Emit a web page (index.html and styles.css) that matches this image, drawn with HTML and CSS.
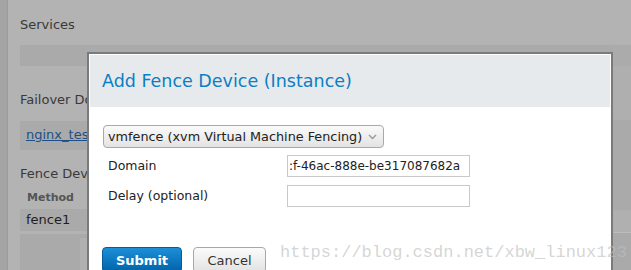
FILE: index.html
```html
<!DOCTYPE html>
<html>
<head>
<meta charset="utf-8">
<link rel="stylesheet" href="styles.css">
</head>
<body>
<div class="app">
  <div class="strip"></div>
  <div class="main">
    <div class="heading h-services">Services</div>
    <div class="bar"></div>
    <div class="heading h-failover">Failover Domain</div>
    <div class="linkbox"><a class="link" href="#">nginx_test</a></div>
    <div class="heading h-fence">Fence Devices</div>
    <div class="colhead">Method</div>
    <div class="row">fence1</div>
    <div class="lower"><div class="lower-left"></div><div class="lower-right"></div></div>
  </div>
  <div class="right">
    <div class="r1"></div><div class="r2"></div><div class="r3"></div><div class="r4"></div><div class="r5"></div><div class="r6"></div>
  </div>
</div>

<div class="modal">
  <div class="modal-head">Add Fence Device (Instance)</div>
  <div class="modal-body">
    <div class="select">
      <span>vmfence (xvm Virtual Machine Fencing)</span>
      <svg class="chev" width="9" height="6" viewBox="0 0 9 6"><path d="M1 1 L4.5 4.5 L8 1" fill="none" stroke="#9a9a9a" stroke-width="1.4"/></svg>
    </div>
    <div class="form">
      <div class="label">Domain</div>
      <div class="input">:f-46ac-888e-be317087682a</div>
      <div class="label">Delay (optional)</div>
      <div class="input"></div>
    </div>
    <div class="buttons">
      <div class="btn submit">Submit</div>
      <div class="btn cancel">Cancel</div>
    </div>
  </div>
</div>

<div class="watermark">https://blog.csdn.net/xbw_linux123</div>
</body>
</html>
```
FILE: styles.css
```css
html, body {
  margin: 0;
  padding: 0;
}
body {
  width: 631px;
  height: 270px;
  overflow: hidden;
  background: #b3b3b3;
  font-family: "DejaVu Sans", Verdana, sans-serif;
  font-size: 13px;
  position: relative;
}
.app {
  display: flex;
  height: 270px;
}
.strip {
  width: 7px;
  background: #a4a4a4;
  border-right: 1px solid #9c9c9c;
  flex: none;
}
.main {
  flex: 1;
  padding-left: 12px;
  display: flex;
  flex-direction: column;
}
.heading {
  color: #393939;
  height: 16px;
  line-height: 16px;
  white-space: nowrap;
}
.h-services { margin-top: 17px; }
.bar {
  margin-top: 12px;
  height: 21px;
  background: #aaaaaa;
}
.h-failover { margin-top: 26px; }
.linkbox {
  margin-top: 13px;
  height: 29px;
  background: #aaaaaa;
  padding-left: 6px;
  line-height: 28px;
}
.link {
  color: #1c4f86;
  text-decoration: underline;
}
.h-fence { margin-top: 16px; }
.colhead {
  margin-top: 9px;
  font-size: 11px;
  font-weight: bold;
  color: #555;
  padding-left: 7px;
  line-height: 14px;
}
.row {
  margin-top: 4px;
  height: 22px;
  line-height: 22px;
  background: #aaaaaa;
  padding-left: 6px;
  color: #1e1e1e;
}
.lower {
  margin-top: 3px;
  flex: 1;
  display: flex;
  background: #aaaaaa;
}
.lower-left { width: 60px; }
.lower-right {
  flex: 1;
  margin-top: 4px;
  background: #b0b0b0;
}
.right {
  width: 18px;
  flex: none;
  display: flex;
  flex-direction: column;
}
.r1 { height: 45px; background: #b3b3b3; }
.r2 { height: 21px; background: #ababab; }
.r3 { height: 54px; background: #afafaf; }
.r4 { height: 90px; background: #aaaaaa; }
.r5 { height: 22px; background: #b0b0b0; border-bottom: 1px solid #bcbcbc; }
.r6 { flex: 1; background: #aaaaaa; }

.modal {
  position: absolute;
  left: 87px;
  top: 52px;
  width: 520px;
  height: 220px;
  border: 2px solid #7a7a7a;
  border-bottom: none;
  padding: 1px;
  background: #fff;
}
.modal-head {
  height: 52px;
  background: #e6eaed;
  color: #0b7ec4;
  font-size: 17.5px;
  line-height: 52px;
  padding-left: 12px;
}
.modal-body {
  padding: 18px 0 0 13px;
}
.select {
  width: 275px;
  height: 21px;
  border: 1px solid #a9a9a9;
  border-radius: 4px;
  background: linear-gradient(#fafafa, #e3e3e3);
  display: flex;
  align-items: center;
  padding-left: 4px;
  color: #222;
  font-size: 12.8px;
  box-sizing: content-box;
  white-space: nowrap;
}
.select span { flex: 1; }
.chev { margin-right: 6px; }
.form {
  display: grid;
  grid-template-columns: 179px 183px;
  grid-auto-rows: 22px;
  row-gap: 8px;
  margin-top: 7px;
  margin-left: 5px;
}
.label {
  color: #222;
  font-size: 12.5px;
  line-height: 22px;
}
.input {
  border: 1px solid #c9c9c9;
  box-sizing: border-box;
  line-height: 20px;
  padding-left: 1px;
  color: #222;
  font-size: 12px;
  white-space: nowrap;
  overflow: hidden;
}
.buttons {
  display: flex;
  gap: 11px;
  margin-top: 40px;
  margin-left: -1px;
}
.btn {
  height: 26px;
  line-height: 26px;
  text-align: center;
  border-radius: 4px;
  box-sizing: border-box;
}
.submit {
  width: 80px;
  color: #fff;
  font-weight: bold;
  background: linear-gradient(#1c8fd8, #0062aa);
  border: 1px solid #0a5a98;
}
.cancel {
  width: 73px;
  color: #333;
  background: linear-gradient(#fbfbfb, #e2e2e2);
  border: 1px solid #a8a8a8;
}
.watermark {
  position: absolute;
  left: 280px;
  top: 243px;
  font-family: "Liberation Mono", monospace;
  font-size: 17px;
  color: rgba(190, 190, 190, 0.65);
  white-space: nowrap;
  line-height: 20px;
}
```
